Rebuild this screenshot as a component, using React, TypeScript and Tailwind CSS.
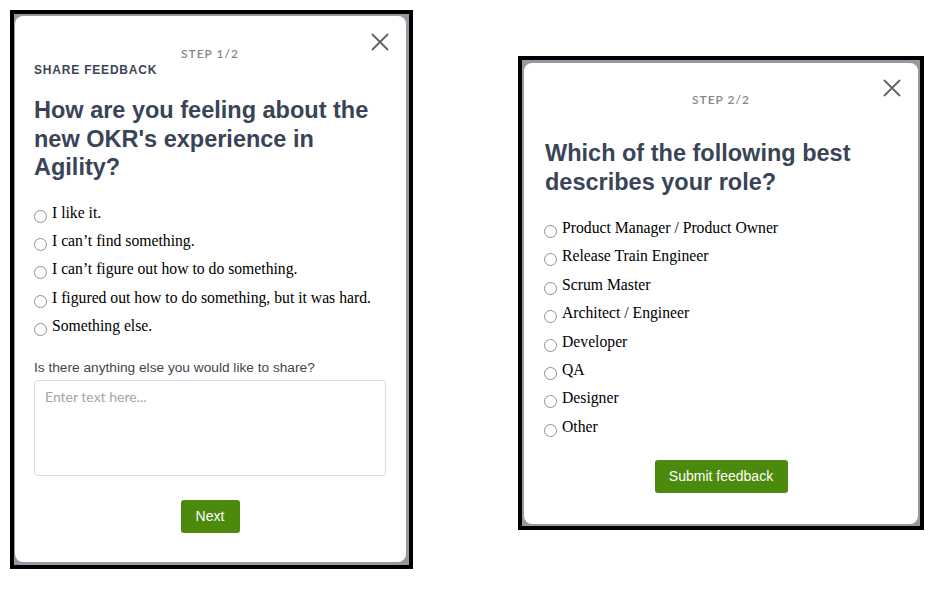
const feelings = [
  'I like it.',
  'I can’t find something.',
  'I can’t figure out how to do something.',
  'I figured out how to do something, but it was hard.',
  'Something else.',
]

const roles = [
  'Product Manager / Product Owner',
  'Release Train Engineer',
  'Scrum Master',
  'Architect / Engineer',
  'Developer',
  'QA',
  'Designer',
  'Other',
]

function CloseIcon() {
  return (
    <svg width="18" height="18" viewBox="0 0 18 18" fill="none" stroke="#5f6368" strokeWidth="1.8" strokeLinecap="round">
      <path d="M1.5 1.5 L16.5 16.5 M16.5 1.5 L1.5 16.5" />
    </svg>
  )
}

function Option({ label }: { label: string }) {
  return (
    <label className="flex items-start h-[28.4px]">
      <span className="mt-[7px] w-[13px] h-[13px] shrink-0 rounded-full border border-[#8f8f8f] bg-white" />
      <span className="ml-[5px] leading-[20px] text-[15.7px] text-black font-['Liberation_Serif',serif]">
        {label}
      </span>
    </label>
  )
}

function StepLabel({ children }: { children: string }) {
  return (
    <div className="text-center leading-[16px] text-[12px] font-semibold tracking-[1px] text-[#888888] font-['Lato',sans-serif]">
      {children}
    </div>
  )
}

function GreenButton({ children, width }: { children: string; width: string }) {
  return (
    <button className={`${width} h-[33px] rounded-[3px] bg-[#4b8a0c] text-white text-[14px] font-['Liberation_Sans',sans-serif]`}>
      {children}
    </button>
  )
}

export default function App() {
  return (
    <div className="w-[944px] h-[592px] bg-white flex items-start pl-[10px] pt-[10px] font-['Liberation_Sans',sans-serif]">
      {/* Step 1 */}
      <div className="w-[403px] h-[559px] border-4 border-black bg-[#949aa1] pl-[1px] pt-[2px] pr-[3px] pb-[3px]">
        <div className="relative h-full bg-white rounded-lg pl-[19px] pr-[20px] pt-[30px]">
          <div className="absolute top-[17px] right-[17px]">
            <CloseIcon />
          </div>
          <StepLabel>STEP 1/2</StepLabel>
          <div className="leading-[16px] text-[12px] font-bold tracking-[0.8px] text-[#3b4556]">
            SHARE FEEDBACK
          </div>
          <h1 className="mt-[18px] text-[23.5px] leading-[28.5px] font-bold text-[#394457]">
            How are you feeling about the new OKR's experience in Agility?
          </h1>
          <div className="mt-[21px]">
            {feelings.map((f) => (
              <Option key={f} label={f} />
            ))}
          </div>
          <div className="mt-[14px] text-[13.7px] leading-[20px] text-[#3f4650]">
            Is there anything else you would like to share?
          </div>
          <div className="mt-[2px] h-[96px] rounded-[4px] border border-[#d9dce1] pl-[10px] pt-[6px] text-[14px] leading-[20px] text-[#a3a6ab] font-['Lato',sans-serif]">
            Enter text here...
          </div>
          <div className="mt-[24px] flex justify-center">
            <GreenButton width="w-[59px]">Next</GreenButton>
          </div>
        </div>
      </div>

      {/* Step 2 */}
      <div className="ml-[105px] mt-[46px] w-[406px] h-[474px] border-4 border-black bg-[#949aa1] pl-[2px] pt-[3px] pr-[2px] pb-[2px]">
        <div className="relative h-full bg-white rounded-lg pl-[20px] pr-[20px] pt-[29px]">
          <div className="absolute top-[16px] right-[17px]">
            <CloseIcon />
          </div>
          <StepLabel>STEP 2/2</StepLabel>
          <h1 className="mt-[31px] pl-[1px] text-[23.5px] leading-[28.5px] font-bold text-[#394457]">
            Which of the following best describes your role?
          </h1>
          <div className="mt-[22px]">
            {roles.map((r) => (
              <Option key={r} label={r} />
            ))}
          </div>
          <div className="mt-[15px] flex justify-center">
            <GreenButton width="w-[133px]">Submit feedback</GreenButton>
          </div>
        </div>
      </div>
    </div>
  )
}
